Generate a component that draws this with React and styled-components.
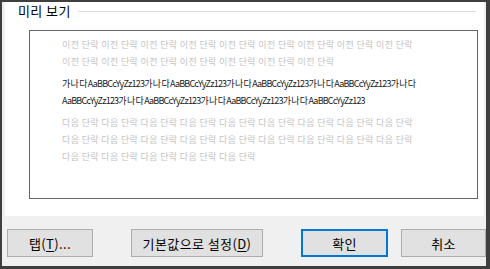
import React from "react";
import styled, { createGlobalStyle } from "styled-components";

const Global = createGlobalStyle`
  html, body { margin: 0; padding: 0; background: #f0f0f0; }
  * { box-sizing: border-box; }
`;

const Frame = styled.div`
  width: 490px;
  height: 269px;
  display: flex;
  flex-direction: column;
  background: #f0f0f0;
  border-style: solid;
  border-color: #3f3f3f;
  border-width: 2px 4px 3px 2px;
  font-family: "Noto Sans CJK KR", "Noto Sans", sans-serif;
  color: #000;
`;

const Panel = styled.div`
  height: 214px;
  margin: 0 2px 0 3px;
  background: #fff;
  display: flex;
  flex-direction: column;
  padding: 0 8px 0 24px;
`;

const GroupHeader = styled.div`
  height: 18px;
  display: flex;
  align-items: center;
  margin-left: -11px;
  gap: 7px;
`;

const GroupLabel = styled.span`
  font-size: 13px;
  line-height: 18px;
  letter-spacing: 0.4px;
`;

const GroupLine = styled.div`
  flex: 1;
  height: 1px;
  background: #dcdcdc;
`;

const Preview = styled.div`
  margin-top: 10px;
  width: 449px;
  height: 169px;
  border: 1px solid #646464;
  padding: 5px 0 0 32px;
  display: flex;
  flex-direction: column;
  gap: 5px;
`;

const Para = styled.div`
  display: flex;
  flex-direction: column;
`;

const Line = styled.div`
  white-space: nowrap;
  font-size: 9px;
  line-height: 17px;
  height: 17px;
  color: ${(p) => (p.$ghost ? "#c4c4c4" : "#1a1a1a")};
  letter-spacing: ${(p) => (p.$ghost ? "0.35px" : "0")};
`;

const Latin = styled.span`
  letter-spacing: -0.8px;
`;

const Hangul = styled.span`
  letter-spacing: 0.33px;
`;

const ButtonRow = styled.div`
  flex: 1;
  display: flex;
  align-items: flex-start;
  padding: 13px 0 0 5px;
`;

const Button = styled.div`
  width: ${(p) => p.$w}px;
  height: 28px;
  margin-left: ${(p) => p.$ml || 0}px;
  background: #e1e1e1;
  border: ${(p) => (p.$default ? "2px solid #0078d7" : "1px solid #adadad")};
  display: flex;
  align-items: center;
  justify-content: center;
  font-size: 13px;
  letter-spacing: 0.4px;
  color: #000;
`;

const U = styled.span`
  text-decoration: underline;
  text-underline-offset: 2px;
`;

const L = "AaBBCcYyZz123";

function Mixed({ parts }) {
  return parts.map((p, i) =>
    p === "L" ? <Latin key={i}>{L}</Latin> : <Hangul key={i}>가나다</Hangul>
  );
}

const rep = (s, n) => Array(n).fill(s).join(" ");

export default function App() {
  return (
    <>
      <Global />
      <Frame>
        <Panel>
          <GroupHeader>
            <GroupLabel>미리 보기</GroupLabel>
            <GroupLine />
          </GroupHeader>
          <Preview>
            <Para>
              <Line $ghost>{rep("이전 단락", 9)}</Line>
              <Line $ghost>{rep("이전 단락", 7)}</Line>
            </Para>
            <Para>
              <Line>
                <Mixed parts={["K", "L", "K", "L", "K", "L", "K", "L", "K"]} />
              </Line>
              <Line>
                <Mixed parts={["L", "K", "L", "K", "L", "K", "L"]} />
              </Line>
            </Para>
            <Para>
              <Line $ghost>{rep("다음 단락", 9)}</Line>
              <Line $ghost>{rep("다음 단락", 9)}</Line>
              <Line $ghost>{rep("다음 단락", 5)}</Line>
            </Para>
          </Preview>
        </Panel>
        <ButtonRow>
          <Button $w={86}>
            탭(<U>T</U>)...
          </Button>
          <Button $w={132} $ml={38}>
            기본값으로 설정(<U>D</U>)
          </Button>
          <Button $w={87} $ml={38} $default>
            확인
          </Button>
          <Button $w={85} $ml={13}>
            취소
          </Button>
        </ButtonRow>
      </Frame>
    </>
  );
}
